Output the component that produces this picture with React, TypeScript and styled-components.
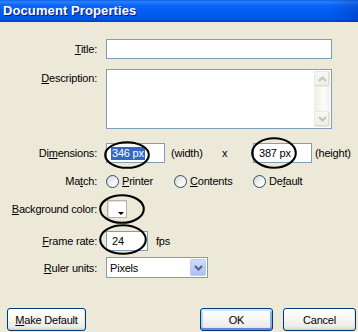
import React from "react";
import styled, { createGlobalStyle } from "styled-components";

const Global = createGlobalStyle`
  html, body { margin: 0; padding: 0; background: #ECE9D8; }
  body { width: 358px; height: 332px; overflow: hidden; }
`;

const Window = styled.div`
  width: 358px;
  height: 332px;
  background: #ece9d8;
  font-family: "Liberation Sans", Arial, sans-serif;
  font-size: 11px;
  letter-spacing: -0.2px;
  color: #000;
  display: flex;
  flex-direction: column;
  overflow: hidden;
`;

const TitleBar = styled.div`
  height: 22px;
  flex: none;
  box-sizing: border-box;
  padding: 0 0 1px 3px;
  display: flex;
  align-items: center;
  background:
    linear-gradient(to right, rgba(0, 0, 0, 0) 92%, rgba(0, 30, 140, 0.25) 100%),
    linear-gradient(
      to bottom,
      #0a5fe6 0%,
      #2b80ff 8%,
      #0a66f7 25%,
      #005cf1 55%,
      #0055e8 85%,
      #0041c6 100%
    );
  color: #fff;
  font-weight: bold;
  font-size: 13px;
  text-shadow: 1px 1px 0 #0a1883;
  letter-spacing: 0.1px;
`;

const Body = styled.div`
  display: flex;
  flex-direction: column;
  padding-top: 17px;
`;

const Row = styled.div<{ $mt: number; $h: number; $top?: boolean }>`
  display: flex;
  align-items: ${(p) => (p.$top ? "flex-start" : "center")};
  margin-top: ${(p) => p.$mt}px;
  height: ${(p) => p.$h}px;
`;

const Label = styled.div<{ $pt?: number }>`
  width: 97px;
  flex: none;
  margin-right: 9px;
  text-align: right;
  white-space: nowrap;
  padding-top: ${(p) => p.$pt ?? 0}px;
`;

const TextBox = styled.div<{ $w: number; $pl?: number }>`
  position: relative;
  box-sizing: border-box;
  width: ${(p) => p.$w}px;
  height: 20px;
  flex: none;
  border: 1px solid #7f9db9;
  background: #fff;
  display: flex;
  align-items: center;
  padding-left: ${(p) => p.$pl ?? 3}px;
  white-space: nowrap;
`;

const Selected = styled.span`
  background: #316ac5;
  color: #fff;
  padding: 0 1px;
  line-height: 13px;
`;

const TextArea = styled.div`
  box-sizing: border-box;
  width: 226px;
  height: 60px;
  border: 1px solid #7f9db9;
  background: #fff;
  display: flex;
  justify-content: flex-end;
  padding: 1px 1px 1px 0;
`;

const ScrollBar = styled.div`
  width: 16px;
  display: flex;
  flex-direction: column;
  background: linear-gradient(to right, #eeede5 0%, #fbfbf8 60%, #f3f2ec 100%);
`;

const ScrollButton = styled.div`
  box-sizing: border-box;
  height: 16px;
  border: 1px solid #e9e8e1;
  border-radius: 2px;
  background: linear-gradient(to bottom, #f7f7f4, #eeede5);
  box-shadow: inset -1px -1px 0 #dedcd3;
  display: flex;
  align-items: center;
  justify-content: center;
`;

const ScrollTrack = styled.div`
  flex: 1;
`;

const Plain = styled.span<{ $w?: number; $ml?: number }>`
  display: inline-block;
  flex: none;
  white-space: nowrap;
  width: ${(p) => (p.$w ? `${p.$w}px` : "auto")};
  margin-left: ${(p) => p.$ml ?? 0}px;
`;

const Option = styled.div<{ $w?: number }>`
  display: flex;
  align-items: center;
  gap: 3px;
  flex: none;
  width: ${(p) => (p.$w ? `${p.$w}px` : "auto")};
`;

const Radio = styled.span`
  box-sizing: border-box;
  width: 13px;
  height: 13px;
  border-radius: 50%;
  border: 1px solid #1c5180;
  background: linear-gradient(135deg, #d6d4ca 0%, #f4f3ee 55%, #ffffff 100%);
  flex: none;
`;

const Swatch = styled.div`
  position: relative;
  box-sizing: border-box;
  width: 20px;
  height: 18px;
  margin-left: 1px;
  border: 1px solid #b5b2a6;
  background: #fff;
  box-shadow: inset 1px 1px 0 #e4e2da;
`;

const SwatchArrow = styled.span`
  position: absolute;
  right: 2px;
  bottom: 2px;
  width: 0;
  height: 0;
  border-left: 3px solid transparent;
  border-right: 3px solid transparent;
  border-top: 3px solid #000;
`;

const Select = styled.div`
  box-sizing: border-box;
  width: 102px;
  height: 21px;
  border: 1px solid #7f9db9;
  background: #fff;
  display: flex;
  align-items: center;
  justify-content: space-between;
  padding: 1px 1px 1px 3px;
`;

const DropButton = styled.div`
  box-sizing: border-box;
  width: 16px;
  height: 17px;
  border: 1px solid #bbcdf7;
  border-radius: 2px;
  background: linear-gradient(to bottom, #cfdcfd 0%, #b9cbf8 60%, #adc1f5 100%);
  display: flex;
  align-items: center;
  justify-content: center;
`;

const ButtonRow = styled.div`
  display: flex;
  margin-top: 30px;
  padding: 0 2px 0 7px;
  align-items: center;
`;

const RightButtons = styled.div`
  display: flex;
  gap: 10px;
  margin-left: auto;
`;

const Button = styled.div<{ $w: number; $default?: boolean }>`
  box-sizing: border-box;
  width: ${(p) => p.$w}px;
  height: 23px;
  border: 1px solid #003c74;
  border-radius: 3px;
  background: linear-gradient(to bottom, #ffffff 0%, #f6f6f2 50%, #ecebe5 85%, #d6d0c5 100%);
  display: flex;
  align-items: center;
  justify-content: center;
  font-size: 11px;
  box-shadow: ${(p) =>
    p.$default
      ? "inset 0 2px 0 #cee7ff, inset 0 -2px 0 #6982ee, inset 2px 0 0 #b8d2fb, inset -2px 0 0 #89ade4"
      : "inset 0 -1px 0 #d6d0c5, inset -1px 0 0 #e3e3db"};
`;

const Mark = styled.svg<{ $l: number; $t: number }>`
  position: absolute;
  left: ${(p) => p.$l}px;
  top: ${(p) => p.$t}px;
  overflow: visible;
  pointer-events: none;
`;

const Anchor = styled.div`
  position: relative;
  display: flex;
  align-items: center;
  flex: none;
`;

function Ellipse({ l, t, w, h }: { l: number; t: number; w: number; h: number }) {
  return (
    <Mark $l={l} $t={t} width={w} height={h} viewBox={`0 0 ${w} ${h}`}>
      <ellipse
        cx={w / 2}
        cy={h / 2}
        rx={w / 2 - 1.2}
        ry={h / 2 - 1.2}
        fill="none"
        stroke="#000"
        strokeWidth={2.1}
      />
    </Mark>
  );
}

function Chevron({ up, color }: { up?: boolean; color: string }) {
  return (
    <svg width="9" height="6" viewBox="0 0 9 6">
      <path
        d={up ? "M1 5 L4.5 1.5 L8 5" : "M1 1 L4.5 4.5 L8 1"}
        fill="none"
        stroke={color}
        strokeWidth="2"
      />
    </svg>
  );
}

export default function App() {
  return (
    <>
      <Global />
      <Window>
        <TitleBar>Document Properties</TitleBar>
        <Body>
          <Row $mt={0} $h={20}>
            <Label>
              <u>T</u>itle:
            </Label>
            <TextBox $w={226} />
          </Row>

          <Row $mt={10} $h={60} $top>
            <Label $pt={3}>
              <u>D</u>escription:
            </Label>
            <TextArea>
              <ScrollBar>
                <ScrollButton>
                  <Chevron up color="#c3c3bb" />
                </ScrollButton>
                <ScrollTrack />
                <ScrollButton>
                  <Chevron color="#c3c3bb" />
                </ScrollButton>
              </ScrollBar>
            </TextArea>
          </Row>

          <Row $mt={14} $h={20}>
            <Label>
              Di<u>m</u>ensions:
            </Label>
            <Anchor>
              <TextBox $w={59} $pl={4}>
                <Selected>346 px</Selected>
              </TextBox>
              <Ellipse l={-2} t={-2} w={46} h={28} />
            </Anchor>
            <Plain $w={51} $ml={6}>
              (width)
            </Plain>
            <Plain $w={31}>x</Plain>
            <Anchor>
              <TextBox $w={59} $pl={5}>
                387 px
              </TextBox>
              <Ellipse l={-2} t={-6} w={46} h={32} />
            </Anchor>
            <Plain $ml={3}>(height)</Plain>
          </Row>

          <Row $mt={10} $h={16}>
            <Label>
              Ma<u>t</u>ch:
            </Label>
            <Option $w={68}>
              <Radio />
              <span>
                <u>P</u>rinter
              </span>
            </Option>
            <Option $w={79}>
              <Radio />
              <span>
                <u>C</u>ontents
              </span>
            </Option>
            <Option>
              <Radio />
              <span>
                De<u>f</u>ault
              </span>
            </Option>
          </Row>

          <Row $mt={11} $h={18}>
            <Label>
              <u>B</u>ackground color:
            </Label>
            <Anchor>
              <Swatch>
                <SwatchArrow />
              </Swatch>
              <Ellipse l={-7} t={-6} w={46} h={30} />
            </Anchor>
          </Row>

          <Row $mt={13} $h={20}>
            <Label>
              <u>F</u>rame rate:
            </Label>
            <Anchor>
              <TextBox $w={42} $pl={5}>
                24
              </TextBox>
              <Ellipse l={-7} t={-7} w={48} h={31} />
            </Anchor>
            <Plain $ml={8}>fps</Plain>
          </Row>

          <Row $mt={6} $h={21}>
            <Label>
              <u>R</u>uler units:
            </Label>
            <Select>
              <span>Pixels</span>
              <DropButton>
                <Chevron color="#4d6185" />
              </DropButton>
            </Select>
          </Row>

          <ButtonRow>
            <Button $w={79}>
              <span>
                <u>M</u>ake Default
              </span>
            </Button>
            <RightButtons>
              <Button $w={73} $default>
                OK
              </Button>
              <Button $w={73}>Cancel</Button>
            </RightButtons>
          </ButtonRow>
        </Body>
      </Window>
    </>
  );
}
